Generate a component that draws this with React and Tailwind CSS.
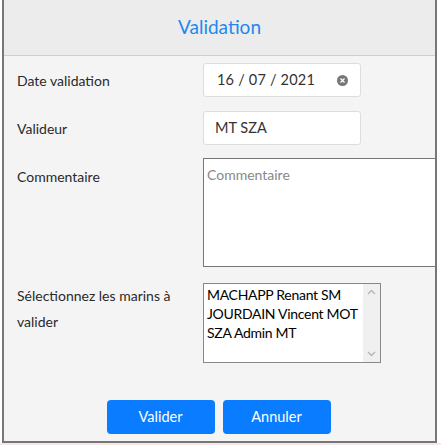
import React from 'react';

const FONT = { fontFamily: 'Lato, "Open Sans", sans-serif' };

const marins = ['MACHAPP Renant SM', 'JOURDAIN Vincent MOT', 'SZA Admin MT'];

const App = () => {
  return (
    <div className="w-[441px] h-[445px] bg-white" style={FONT}>
      <div className="ml-[2px] w-[435px] h-[443px] border-l-2 border-r-2 border-b-2 border-[#777] bg-[#f4f4f4] flex flex-col overflow-hidden">
        {/* header */}
        <div className="h-[56px] shrink-0 bg-[#ececec] border-b border-[#cfcfcf] flex items-center justify-center">
          <h2 className="text-[19px] text-[#1e88f0] -mt-[1px]">Validation</h2>
        </div>

        <div className="flex flex-col pl-[13px] text-[14px] text-[#2a2a2a]">
          {/* date */}
          <div className="flex items-center mt-[7px] h-[34px]">
            <label className="w-[186px] shrink-0">Date validation</label>
            <div className="w-[158px] h-[34px] bg-white border border-[#ddd] rounded-[3px] flex items-center pl-[13px] pr-[12px]">
              <span className="flex-1 text-[14.5px] text-[#333] tracking-[0.2px]">16 / 07 / 2021</span>
              <span className="w-[11px] h-[11px] rounded-full bg-[#777] flex items-center justify-center">
                <svg width="5" height="5" viewBox="0 0 5 5">
                  <path d="M0.5 0.5 L4.5 4.5 M4.5 0.5 L0.5 4.5" stroke="white" strokeWidth="1.3" />
                </svg>
              </span>
            </div>
          </div>

          {/* valideur */}
          <div className="flex items-center mt-[14px] h-[34px]">
            <label className="w-[186px] shrink-0">Valideur</label>
            <div className="w-[158px] h-[34px] bg-white border border-[#ddd] rounded-[3px] flex items-center pl-[11px] text-[14.5px] text-[#333]">
              MT SZA
            </div>
          </div>

          {/* commentaire */}
          <div className="flex mt-[13px]">
            <label className="w-[186px] shrink-0 pt-[8px]">Commentaire</label>
            <div className="w-[240px] shrink-0 h-[109px] bg-white border border-[#777] px-[3px] pt-[5px] text-[#888]">
              Commentaire
            </div>
          </div>

          {/* marins */}
          <div className="flex mt-[16px]">
            <label className="w-[186px] shrink-0 leading-[26px]">
              Sélectionnez les marins à<br />valider
            </label>
            <div className="w-[178px] shrink-0 h-[80px] bg-white border border-[#888] flex">
              <div className="flex-1 min-w-0 overflow-hidden pl-[3px] pt-[1px] text-[14px] tracking-[-0.3px] text-black leading-[19px] whitespace-nowrap">
                {marins.map((m) => (
                  <div key={m}>{m}</div>
                ))}
              </div>
              <div className="w-[17px] shrink-0 bg-[#f0f0f0] flex flex-col items-center justify-between py-[5px]">
                <svg width="9" height="6" viewBox="0 0 9 6">
                  <path d="M1 5 L4.5 1.5 L8 5" fill="none" stroke="#b5b5b5" strokeWidth="1.4" />
                </svg>
                <svg width="9" height="6" viewBox="0 0 9 6">
                  <path d="M1 1 L4.5 4.5 L8 1" fill="none" stroke="#b5b5b5" strokeWidth="1.4" />
                </svg>
              </div>
            </div>
          </div>
        </div>

        {/* buttons */}
        <div className="flex justify-center gap-[8px] mt-[37px] pr-[2px]">
          <button className="w-[108px] h-[34px] bg-[#0a7cff] text-white text-[14.5px] rounded-[4px]">Valider</button>
          <button className="w-[108px] h-[34px] bg-[#0a7cff] text-white text-[14.5px] rounded-[4px]">Annuler</button>
        </div>
      </div>
      <div className="h-[2px] bg-[#f6e7e9]" />
    </div>
  );
};

export default App;
